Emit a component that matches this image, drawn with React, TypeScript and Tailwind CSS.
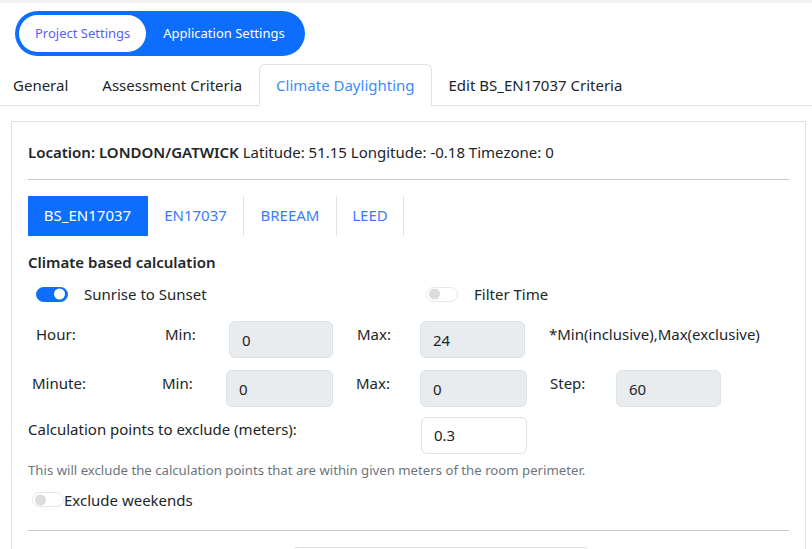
import React, { useState } from 'react';

const tabs = ['General', 'Assessment Criteria', 'Climate Daylighting', 'Edit BS_EN17037 Criteria'];
const subTabs = [
    { label: 'BS_EN17037', w: 'w-[120px]' },
    { label: 'EN17037', w: 'w-[96px]' },
    { label: 'BREEAM', w: 'w-[93px]' },
    { label: 'LEED', w: 'w-[67px]' },
];

const Toggle: React.FC<{ on?: boolean; className?: string }> = ({ on, className = '' }) => (
    <div
        className={`relative h-[15px] w-[32px] rounded-full border flex-none ${
            on ? 'bg-[#0d6efd] border-[#0d6efd]' : 'bg-white border-[#e5e7eb]'
        } ${className}`}
    >
        <div
            className={`absolute top-1/2 -translate-y-1/2 h-[11px] w-[11px] rounded-full ${
                on ? 'right-[2px] bg-white' : 'left-[2px] bg-[#dcdcdc]'
            }`}
        />
    </div>
);

const Field: React.FC<{ value: string; disabled?: boolean; className?: string }> = ({ value, disabled = true, className = '' }) => (
    <div
        className={`h-[37px] rounded-md border border-[#dee2e6] flex items-center px-3 text-[15px] text-[#212529] ${
            disabled ? 'bg-[#e9ecef] pt-[2px]' : 'bg-white'
        } ${className}`}
    >
        {value}
    </div>
);

export default function App() {
    const [tab, setTab] = useState(2);
    const [sub, setSub] = useState(0);

    return (
        <div className="w-[812px] h-[549px] overflow-hidden bg-white text-[#212529]" style={{ fontFamily: '"Noto Sans", "Open Sans", sans-serif' }}>
            <div className="h-[3px] bg-[#f3f3f3]" />

            {/* Project / Application switch */}
            <div className="pl-[15px] pt-[8px]">
                <div className="inline-flex items-center h-[45px] rounded-full bg-[#0d6efd] pl-[4px] pr-[20px] py-[4px]">
                    <div className="h-full flex items-center px-[16px] rounded-full bg-white text-[13px] text-[#5b5ff0]">Project Settings</div>
                    <div className="h-full flex items-center pl-[17px] text-[13px] text-white">Application Settings</div>
                </div>
            </div>

            {/* Tabs */}
            <div className="mt-[8px] flex border-b border-[#dee2e6] h-[42px]">
                {tabs.map((t, i) => (
                    <button
                        key={t}
                        onClick={() => setTab(i)}
                        className={`-mb-px px-[16px] first:pl-[12px] text-[15px] rounded-t-md border ${
                            tab === i
                                ? 'bg-white border-[#dee2e6] border-b-white text-[#3d8bfd]'
                                : 'border-transparent text-[#212529]'
                        }`}
                    >
                        {t}
                    </button>
                ))}
            </div>

            {/* Card */}
            <div className="mt-[15px] ml-[11px] w-[795px] border border-[#dee2e6] px-[16px] pt-[19px]">
                <div className="text-[15px]">
                    <span className="font-semibold">Location: LONDON/GATWICK</span> Latitude: 51.15 Longitude: -0.18 Timezone: 0
                </div>
                <div className="mt-[15px] h-px bg-[#c8c8c8]" />

                <div className="mt-[16px] flex h-[40px]">
                    {subTabs.map((s, i) => (
                        <button
                            key={s.label}
                            onClick={() => setSub(i)}
                            className={`${s.w} text-center text-[15px] border-r border-[#dee2e6] ${
                                sub === i ? 'bg-[#0d6efd] text-white border-r-[#0d6efd]' : 'text-[#3d7bfd]'
                            }`}
                        >
                            {s.label}
                        </button>
                    ))}
                </div>

                <div className="mt-[15px] text-[15px] font-semibold">Climate based calculation</div>

                <div className="mt-[13px] flex items-center h-[16px]">
                    <div className="w-[398px] flex items-center">
                        <Toggle on className="ml-[8px]" />
                        <span className="ml-[16px] text-[15px]">Sunrise to Sunset</span>
                    </div>
                    <Toggle />
                    <span className="ml-[16px] text-[15px]">Filter Time</span>
                </div>

                {/* Hour */}
                <div className="mt-[19px] flex items-start text-[15px]">
                    <span className="ml-[8px] w-[129px] mt-[2px]">Hour:</span>
                    <span className="w-[64px] mt-[2px]">Min:</span>
                    <Field value="0" className="w-[104px]" />
                    <span className="ml-[24px] w-[63px] mt-[2px]">Max:</span>
                    <Field value="24" className="w-[105px]" />
                    <span className="ml-[24px] mt-[2px]">*Min(inclusive),Max(exclusive)</span>
                </div>

                {/* Minute */}
                <div className="mt-[12px] flex items-start text-[15px]">
                    <span className="ml-[4px] w-[130px] mt-[2px]">Minute:</span>
                    <span className="w-[64px] mt-[2px]">Min:</span>
                    <Field value="0" className="w-[107px]" />
                    <span className="ml-[23px] w-[64px] mt-[2px]">Max:</span>
                    <Field value="0" className="w-[107px]" />
                    <span className="ml-[23px] w-[66px] mt-[2px]">Step:</span>
                    <Field value="60" className="w-[105px]" />
                </div>

                {/* Exclude */}
                <div className="mt-[10px] flex items-start text-[15px]">
                    <span className="w-[393px] mt-[1px]">Calculation points to exclude (meters):</span>
                    <Field value="0.3" disabled={false} className="w-[106px]" />
                </div>
                <div className="mt-[7px] text-[13.2px] text-[#6c757d]">
                    This will exclude the calculation points that are within given meters of the room perimeter.
                </div>

                <div className="mt-[11px] flex items-center h-[16px]">
                    <Toggle className="ml-[4px]" />
                    <span className="text-[15px]">Exclude weekends</span>
                </div>

                <div className="mt-[22px] h-px bg-[#c8c8c8]" />

                <div className="mt-[16px] ml-[264px] w-[298px] h-[36px] rounded-md border border-[#dee2e6]" />
            </div>
        </div>
    );
}
